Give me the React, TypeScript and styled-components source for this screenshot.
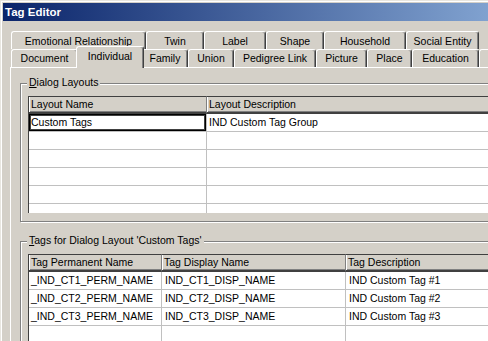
import React from 'react';
import styled, { createGlobalStyle } from 'styled-components';

const GlobalStyle = createGlobalStyle`
  html, body {
    margin: 0;
    padding: 0;
    background: #d4d0c8;
  }
  * {
    box-sizing: border-box;
  }
`;

const topTabs = [
  { label: 'Emotional Relationship', width: 135 },
  { label: 'Twin', width: 58 },
  { label: 'Label', width: 62 },
  { label: 'Shape', width: 58 },
  { label: 'Household', width: 82 },
  { label: 'Social Entity', width: 73 },
];

const bottomTabs = [
  { label: 'Document', width: 67 },
  { label: 'Individual', width: 64, active: true },
  { label: 'Family', width: 46 },
  { label: 'Union', width: 46 },
  { label: 'Pedigree Link', width: 82 },
  { label: 'Picture', width: 51 },
  { label: 'Place', width: 45 },
  { label: 'Education', width: 67 },
  { label: 'Custom', width: 60 },
];

const tagRows = [
  ['_IND_CT1_PERM_NAME', 'IND_CT1_DISP_NAME', 'IND Custom Tag #1'],
  ['_IND_CT2_PERM_NAME', 'IND_CT2_DISP_NAME', 'IND Custom Tag #2'],
  ['_IND_CT3_PERM_NAME', 'IND_CT3_DISP_NAME', 'IND Custom Tag #3'],
  ['', '', ''],
];

export default function App() {
  return (
    <Window>
      <GlobalStyle />
      <TitleBar>Tag Editor</TitleBar>

      <Body>
        <TabStrip>
          <TabRow>
            {topTabs.map((t) => (
              <Tab key={t.label} $width={t.width} $top>
                {t.label}
              </Tab>
            ))}
          </TabRow>
          <TabRow>
            {bottomTabs.map((t) => (
              <Tab key={t.label} $width={t.width} $active={t.active}>
                {t.label}
              </Tab>
            ))}
          </TabRow>
        </TabStrip>

        <Panel>
          <GroupBox>
            <GroupLabel>
              <u>D</u>ialog Layouts
            </GroupLabel>
            <Grid $columns="178px 400px" $height={117}>
              <HeaderCell>Layout Name</HeaderCell>
              <HeaderCell>Layout Description</HeaderCell>
              <Cell $focused>Custom Tags</Cell>
              <Cell>IND Custom Tag Group</Cell>
              {[0, 1, 2, 3, 4].map((i) => (
                <React.Fragment key={i}>
                  <Cell />
                  <Cell />
                </React.Fragment>
              ))}
            </Grid>
          </GroupBox>

          <GroupBox>
            <GroupLabel>
              <u>T</u>ags for Dialog Layout 'Custom Tags'
            </GroupLabel>
            <Grid $columns="133px 184px 300px" $height={100}>
              <HeaderCell>Tag Permanent Name</HeaderCell>
              <HeaderCell>Tag Display Name</HeaderCell>
              <HeaderCell>Tag Description</HeaderCell>
              {tagRows.map((row, i) => (
                <React.Fragment key={i}>
                  {row.map((v, j) => (
                    <Cell key={j} $pad={j === 0 ? 2 : 3}>
                      {v}
                    </Cell>
                  ))}
                </React.Fragment>
              ))}
            </Grid>
          </GroupBox>
        </Panel>
      </Body>
    </Window>
  );
}

const Window = styled.div`
  width: 488px;
  height: 341px;
  overflow: hidden;
  padding: 3px 0 0 3px;
  background: #d4d0c8;
  box-shadow: inset 1px 1px 0 #e8e6e0, inset 2px 2px 0 #ffffff;
  font-family: 'Liberation Sans', Arial, sans-serif;
  color: #000;
`;

const TitleBar = styled.div`
  height: 18px;
  width: 600px;
  padding-left: 2px;
  line-height: 18px;
  font-size: 11.5px;
  font-weight: 700;
  color: #fff;
  background: linear-gradient(to right, #0a246a 0, #a6caf0 640px);
`;

const Body = styled.div`
  padding: 10px 0 0 7px;
`;

const TabStrip = styled.div`
  display: flex;
  flex-direction: column;
  padding-left: 1px;
`;

const TabRow = styled.div`
  display: flex;
  height: 18px;
  white-space: nowrap;
`;

const Tab = styled.div<{ $width: number; $active?: boolean; $top?: boolean }>`
  position: relative;
  flex: 0 0 auto;
  width: ${(p) => p.$width + (p.$active ? 4 : 0)}px;
  height: ${(p) => (p.$active ? 22 : 18)}px;
  margin: ${(p) => (p.$active ? '-3px -2px -1px' : '0')};
  z-index: ${(p) => (p.$active ? 2 : 0)};
  border-left: 1px solid #fff;
  border-top: 1px solid #fff;
  border-right: 1px solid #404040;
  border-radius: 3px 3px 0 0;
  box-shadow: inset -1px 0 0 #808080;
  background: #d4d0c8;
  text-align: center;
  font-size: 10.5px;
  line-height: ${(p) => (p.$active ? 19 : p.$top ? 19 : 17)}px;
  overflow: hidden;
`;

const Panel = styled.div`
  position: relative;
  z-index: 1;
  width: 600px;
  height: 300px;
  padding: 15px 0 0 9px;
  border-left: 1px solid #fff;
  border-top: 1px solid #fff;
`;

const GroupBox = styled.div`
  position: relative;
  width: 560px;
  padding: 12px 0 8px 7px;
  margin-bottom: 19px;
  border: 1px solid #808080;
  box-shadow: inset 1px 1px 0 #fff, 1px 1px 0 #fff;
`;

const GroupLabel = styled.div`
  position: absolute;
  top: -8px;
  left: 6px;
  padding: 0 2px;
  background: #d4d0c8;
  font-size: 10.5px;
  line-height: 13px;
  white-space: nowrap;
`;

const Grid = styled.div<{ $columns: string; $height: number }>`
  display: grid;
  grid-template-columns: ${(p) => p.$columns};
  grid-auto-rows: 18px;
  height: ${(p) => p.$height}px;
  overflow: hidden;
  background: #fff;
  border-left: 1px solid #404040;
  font-size: 10.5px;
`;

const HeaderCell = styled.div`
  height: 18px;
  padding-left: 2px;
  background: #d4d0c8;
  border-top: 1px solid #404040;
  border-bottom: 2px solid #404040;
  border-right: 1px solid #808080;
  box-shadow: inset 1px 0 0 #fff, inset 0 -1px 0 #808080;
  line-height: 15px;
  white-space: nowrap;
  overflow: hidden;
`;

const Cell = styled.div<{ $focused?: boolean; $pad?: number }>`
  height: 18px;
  padding-left: ${(p) => p.$pad ?? 2}px;
  border-right: 1px solid #c0c0c0;
  border-bottom: 1px solid #c0c0c0;
  line-height: 17px;
  white-space: nowrap;
  overflow: hidden;
  ${(p) => (p.$focused ? 'box-shadow: inset 0 0 0 1px #000, inset 0 0 0 2px #404040;' : '')}
`;
